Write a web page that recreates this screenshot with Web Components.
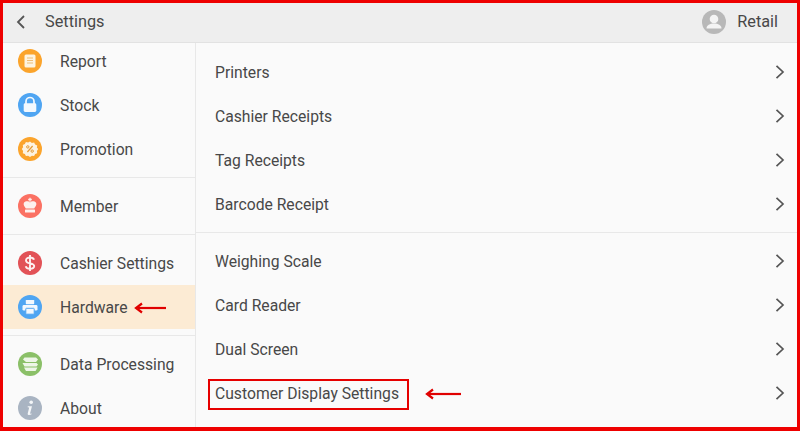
<!DOCTYPE html>
<html>
<head>
<meta charset="utf-8">
<style>
    html, body {
        margin: 0;
        padding: 0;
        background: #fafafa;
    }
</style>
</head>
<body>
<settings-app>
    <top-bar slot="top" title="Settings" user="Retail"></top-bar>
    <side-menu slot="side">
        <menu-group first>
            <menu-item icon="report">Report</menu-item>
            <menu-item icon="stock">Stock</menu-item>
            <menu-item icon="promotion">Promotion</menu-item>
        </menu-group>
        <menu-group>
            <menu-item icon="member">Member</menu-item>
        </menu-group>
        <menu-group>
            <menu-item icon="cashier">Cashier Settings</menu-item>
            <menu-item icon="hardware" active>Hardware<red-arrow></red-arrow></menu-item>
        </menu-group>
        <menu-group last>
            <menu-item icon="data">Data Processing</menu-item>
            <menu-item icon="about">About</menu-item>
        </menu-group>
    </side-menu>
    <detail-list slot="main">
        <menu-group>
            <list-row>Printers</list-row>
            <list-row>Cashier Receipts</list-row>
            <list-row>Tag Receipts</list-row>
            <list-row>Barcode Receipt</list-row>
        </menu-group>
        <menu-group last>
            <list-row>Weighing Scale</list-row>
            <list-row>Card Reader</list-row>
            <list-row>Dual Screen</list-row>
            <list-row marked>Customer Display Settings</list-row>
        </menu-group>
    </detail-list>
</settings-app>

<script>
    const ICONS = {
        report: `<circle cx="12" cy="12" r="12" fill="#fba42c"/>
            <rect x="6.5" y="5.5" width="11" height="13" rx="1.5" fill="#fdf3e0"/>
            <path d="M9 9h6M9 11.5h6M9 14h6" stroke="#eebd76" stroke-width="1.2"/>`,
        stock: `<circle cx="12" cy="12" r="12" fill="#4fa5f2"/>
            <path d="M8 11V8.500a4 4 0 0 1 8 0V11" fill="none" stroke="#f2f8fe" stroke-width="1.700"/>
            <rect x="5.700" y="10.300" width="12.600" height="8.700" rx="1.400" fill="#f2f8fe"/>`,
        promotion: `<circle cx="12" cy="12" r="12" fill="#fba42c"/>
            <path d="M12 4.6l1.9 1.3 2.2-.4 1 2 2.1.9-.3 2.3L20.2 12l-1.3 1.9.3 2.3-2.1.9-1 2-2.2-.4L12 20l-1.9-1.3-2.2.4-1-2-2.1-.9.3-2.3L3.8 12l1.3-1.7-.3-2.3 2.1-.9 1-2 2.2.4z" fill="#fdf3e0"/>
            <path d="M9.4 15l5.2-6" stroke="#e39a35" stroke-width="1.2"/>
            <circle cx="9.8" cy="9.9" r="1.2" fill="none" stroke="#e39a35"/>
            <circle cx="14.2" cy="14.1" r="1.2" fill="none" stroke="#e39a35"/>`,
        member: `<circle cx="12" cy="12" r="12" fill="#fb7163"/>
            <path d="M12 3.800v4M10.200 5.500h3.600" stroke="#fdf1ee" stroke-width="1.300"/>
            <path d="M12 8.500c-1.200-1.500-5.200-1.900-6.200.6-.8 2 1.200 3.900 2 5.500h8.400c.8-1.600 2.800-3.500 2-5.500-1-2.500-5-2.100-6.200-.6z" fill="#fdf1ee"/>
            <rect x="7" y="15.600" width="10" height="2.800" rx=".5" fill="#fdf1ee"/>`,
        cashier: `<circle cx="12" cy="12" r="12" fill="#e25257"/>
            <path d="M16 8.700c-.5-1.400-2-2.200-4-2.200-2.300 0-4 1.100-4 2.900 0 4 8.200 2 8.200 5.600 0 1.700-1.800 2.700-4.200 2.700-2.200 0-3.800-.9-4.300-2.500M12 4v16" fill="none" stroke="#fdf0f0" stroke-width="1.900"/>`,
        hardware: `<circle cx="12" cy="12" r="12" fill="#4fa5f2"/>
            <rect x="7.800" y="5" width="8.400" height="4.200" rx=".6" fill="#f2f8fe"/>
            <rect x="4.500" y="10" width="15" height="5.600" rx="1.400" fill="#f2f8fe"/>
            <rect x="7.800" y="13.300" width="8.400" height="5.900" rx=".6" fill="#f2f8fe" stroke="#4fa5f2" stroke-width="1"/>`,
        data: `<circle cx="12" cy="12" r="12" fill="#8bc068"/>
            <path d="M6.500 5.500H18l2 2-2 2.500H8L5 7.500zM4.500 11h14l1.500 1.500-1.500 2H6.500zM6 15.500h13.500L17.500 19H8z" fill="#eef6e8"/>`,
        about: `<circle cx="12" cy="12" r="12" fill="#a9b4c2"/>
            <circle cx="13.200" cy="6.300" r="1.800" fill="#f4f6f8"/>
            <path d="M9.800 10.300h4.200l-1.900 7c-.1.500.3.700 1.600.1l-.1.900c-1.400 1-4.300 1.300-3.900-.8l1.500-5.900-1.600-.3z" fill="#f4f6f8"/>`
    };

    customElements.define('settings-app', class extends HTMLElement {
        constructor() {
            super();
            this.attachShadow({ mode: 'open' }).innerHTML = `
                <style>
                    :host {
                        display: block;
                        box-sizing: border-box;
                        width: 800px;
                        height: 431px;
                        border: solid #ee0000;
                        border-width: 3px 3px 4px 3px;
                        overflow: hidden;
                        background: #fafafa;
                        color: #484848;
                        font-family: Roboto, "Liberation Sans", sans-serif;
                        font-size: 15.7px;
                    }
                    .wrap {
                        display: grid;
                        grid-template-rows: 40px 1fr;
                        grid-template-columns: 193px 1fr;
                        height: 100%;
                    }
                    ::slotted([slot="top"]) { grid-column: 1 / 3; }
                </style>
                <div class="wrap">
                    <slot name="top"></slot>
                    <slot name="side"></slot>
                    <slot name="main"></slot>
                </div>`;
        }
    });

    customElements.define('top-bar', class extends HTMLElement {
        constructor() {
            super();
            this.attachShadow({ mode: 'open' }).innerHTML = `
                <style>
                    :host {
                        display: flex;
                        align-items: center;
                        box-sizing: border-box;
                        height: 40px;
                        padding: 0 19px 2px 13px;
                        background: #eeeeee;
                        border-bottom: 1px solid #e2e2e2;
                        font-size: 16.3px;
                    }
                    .title { margin-left: 17px; flex: 1; }
                    .user { margin-left: 11px; }
                    svg { display: block; }
                </style>
                <svg width="12" height="14" viewBox="0 0 12 14"><path d="M8 1L2 7l6 6" fill="none" stroke="#555" stroke-width="1.800"/></svg>
                <span class="title">${this.getAttribute('title')}</span>
                <svg width="24" height="24" viewBox="0 0 24 24">
                    <circle cx="12" cy="12" r="12" fill="#b8b8b8"/>
                    <circle cx="12" cy="9" r="4.300" fill="#f4f4f4"/>
                    <path d="M4.500 18.500c0-3.500 3.500-5 7.500-5s7.500 1.500 7.500 5z" fill="#f4f4f4"/>
                </svg>
                <span class="user">${this.getAttribute('user')}</span>`;
        }
    });

    customElements.define('side-menu', class extends HTMLElement {
        constructor() {
            super();
            this.attachShadow({ mode: 'open' }).innerHTML = `
                <style>
                    :host {
                        display: block;
                        overflow: hidden;
                        border-right: 1px solid #e8e8e8;
                    }
                    /* list is scrolled a little in the reference */
                    .scroll { margin-top: -4px; }
                </style>
                <div class="scroll"><slot></slot></div>`;
        }
    });

    customElements.define('detail-list', class extends HTMLElement {
        constructor() {
            super();
            this.attachShadow({ mode: 'open' }).innerHTML = `
                <style>
                    :host { display: block; overflow: hidden; padding-top: 7px; }
                </style>
                <slot></slot>`;
        }
    });

    customElements.define('menu-group', class extends HTMLElement {
        constructor() {
            super();
            this.attachShadow({ mode: 'open' }).innerHTML = `
                <style>
                    :host {
                        display: block;
                        padding: 6px 0;
                        border-bottom: 1px solid #e8e8e8;
                    }
                    :host([first]) { padding-top: 0; }
                    :host([last]) { border-bottom: 0; }
                </style>
                <slot></slot>`;
        }
        connectedCallback() {
            // groups in the right pane start flush, their top gap is the pane padding
            if (this.parentElement.localName === 'detail-list' && !this.previousElementSibling) {
                this.style.paddingTop = '0';
            }
        }
    });

    customElements.define('menu-item', class extends HTMLElement {
        constructor() {
            super();
            this.attachShadow({ mode: 'open' }).innerHTML = `
                <style>
                    :host {
                        display: flex;
                        align-items: center;
                        height: 44px;
                        padding-left: 14.500px;
                    }
                    :host([active]) { background: #fcebd4; }
                    svg { display: block; margin-right: 18.500px; flex: none; }
                </style>
                <svg width="24" height="24" viewBox="0 0 24 24">${ICONS[this.getAttribute('icon')]}</svg>
                <slot></slot>`;
        }
    });

    customElements.define('list-row', class extends HTMLElement {
        constructor() {
            super();
            const marked = this.hasAttribute('marked');
            this.attachShadow({ mode: 'open' }).innerHTML = `
                <style>
                    :host {
                        display: flex;
                        align-items: center;
                        justify-content: space-between;
                        height: 44px;
                        padding: 0 12px 0 19px;
                    }
                    .label { position: relative; display: flex; align-items: center; }
                    .box {
                        position: absolute;
                        left: -7px;
                        top: -5px;
                        width: 201px;
                        height: 31px;
                        box-sizing: border-box;
                        border: 2px solid #e60000;
                    }
                    red-arrow { position: absolute; left: 210px; top: 4px; margin: 0; }
                    svg { display: block; margin-top: -1px; }
                </style>
                <span class="label"><slot></slot>${marked ? '<span class="box"></span><red-arrow width="36"></red-arrow>' : ''}</span>
                <svg width="10" height="16" viewBox="0 0 10 16"><path d="M1.500 1.800L8 8l-6.500 6.200" fill="none" stroke="#555" stroke-width="1.700"/></svg>`;
        }
    });

    customElements.define('red-arrow', class extends HTMLElement {
        constructor() {
            super();
            const w = +(this.getAttribute('width') || 32);
            this.attachShadow({ mode: 'open' }).innerHTML = `
                <style>
                    :host { display: inline-block; margin-left: 6px; line-height: 0; position: relative; top: 1px; }
                </style>
                <svg width="${w}" height="12" viewBox="0 0 ${w} 12">
                    <path d="M${w} 6H4" stroke="#e00000" stroke-width="2.200"/>
                    <path d="M8 1.500L2 6l6 4.500" fill="none" stroke="#e00000" stroke-width="2.200"/>
                </svg>`;
        }
    });
</script>
</body>
</html>
